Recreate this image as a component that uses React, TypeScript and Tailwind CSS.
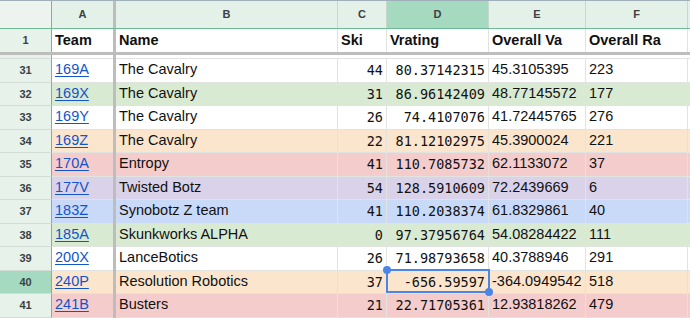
import React from "react";

type Row = { n: number; team: string; name: string; c: string; d: string; e: string; f: string; bg: string };

const BG: Record<string, string> = {
  w: "bg-white",
  g: "bg-[#d9ead3]",
  o: "bg-[#fce5cd]",
  r: "bg-[#f4cccc]",
  p: "bg-[#d9d2e9]",
  b: "bg-[#c9daf8]",
};

const rows: Row[] = [
  { n: 31, team: "169A", name: "The Cavalry", c: "44", d: "80.37142315", e: "45.3105395", f: "223", bg: "w" },
  { n: 32, team: "169X", name: "The Cavalry", c: "31", d: "86.96142409", e: "48.77145572", f: "177", bg: "g" },
  { n: 33, team: "169Y", name: "The Cavalry", c: "26", d: "74.4107076", e: "41.72445765", f: "276", bg: "w" },
  { n: 34, team: "169Z", name: "The Cavalry", c: "22", d: "81.12102975", e: "45.3900024", f: "221", bg: "o" },
  { n: 35, team: "170A", name: "Entropy", c: "41", d: "110.7085732", e: "62.1133072", f: "37", bg: "r" },
  { n: 36, team: "177V", name: "Twisted Botz", c: "54", d: "128.5910609", e: "72.2439669", f: "6", bg: "p" },
  { n: 37, team: "183Z", name: "Synobotz Z team", c: "41", d: "110.2038374", e: "61.8329861", f: "40", bg: "b" },
  { n: 38, team: "185A", name: "Skunkworks ALPHA", c: "0", d: "97.37956764", e: "54.08284422", f: "111", bg: "g" },
  { n: 39, team: "200X", name: "LanceBotics", c: "26", d: "71.98793658", e: "40.3788946", f: "291", bg: "w" },
  { n: 40, team: "240P", name: "Resolution Robotics", c: "37", d: "-656.59597", e: "-364.0949542", f: "518", bg: "o" },
  { n: 41, team: "241B", name: "Busters", c: "21", d: "22.71705361", e: "12.93818262", f: "479", bg: "r" },
  { n: 42, team: "", name: "", c: "", d: "", e: "", f: "", bg: "p" },
];

const cellB = "border-r border-b border-[#e1e3e1]";
const mono = "font-['DejaVu_Sans_Mono',monospace] text-[13.5px]";

function FrozenBar() {
  return <div className="w-[3px] shrink-0 bg-[#bdbdbd]" />;
}

export default function App() {
  return (
    <div className="w-[690px] h-[318px] overflow-hidden bg-white font-['Liberation_Sans',Arial,sans-serif] text-[14px] text-[#111]">
      {/* column header */}
      <div className="flex h-[29px] border-t border-[#9fb0bb] border-b border-b-[#6dbb93] bg-[#e3f1e8] text-[11px] font-bold text-[#3c4043]">
        <div className="w-[52px] shrink-0 bg-[#edf3ef] border-r border-[#6dbb93]" />
        <div className="w-[61px] shrink-0 flex items-center justify-center">A</div>
        <FrozenBar />
        <div className="w-[222px] shrink-0 flex items-center justify-center border-r border-[#c8d6cd]">B</div>
        <div className="w-[49px] shrink-0 flex items-center justify-center border-r border-[#c8d6cd]">C</div>
        <div className="w-[102px] shrink-0 flex items-center justify-center border-r border-[#c8d6cd] bg-[#a6dac0]">D</div>
        <div className="w-[97px] shrink-0 flex items-center justify-center border-r border-[#c8d6cd]">E</div>
        <div className="w-[102px] shrink-0 flex items-center justify-center border-r border-[#c8d6cd]">F</div>
        <div className="flex-1" />
      </div>

      {/* frozen row 1 */}
      <div className="flex h-[23px] font-bold text-[14.5px]">
        <div className="w-[52px] shrink-0 bg-[#e6f2ea] border-r border-[#6dbb93] flex items-center justify-center text-[11px] text-[#3c4043]">1</div>
        <div className="w-[61px] shrink-0 flex items-center px-[3px] overflow-hidden whitespace-nowrap">Team</div>
        <FrozenBar />
        <div className="w-[222px] shrink-0 flex items-center px-[3px] border-r border-[#e1e3e1]">Name</div>
        <div className="w-[49px] shrink-0 flex items-center px-[3px] border-r border-[#e1e3e1] overflow-hidden">Ski</div>
        <div className="w-[102px] shrink-0 flex items-center px-[3px] border-r border-[#e1e3e1]">Vrating</div>
        <div className="w-[97px] shrink-0 flex items-center px-[3px] border-r border-[#e1e3e1] overflow-hidden whitespace-nowrap">Overall Va</div>
        <div className="w-[102px] shrink-0 flex items-center px-[3px] border-r border-[#e1e3e1] overflow-hidden whitespace-nowrap">Overall Ra</div>
        <div className="flex-1" />
      </div>

      {/* frozen separator */}
      <div className="flex h-[3px] bg-[#bdbdbd]" />

      {/* partial row 30 */}
      <div className="flex h-[4px]">
        <div className="w-[52px] shrink-0 bg-[#e6f2ea] border-r border-[#6dbb93] border-b border-b-[#d3dcd6]" />
        <div className="w-[61px] shrink-0 border-b border-[#e1e3e1]" />
        <FrozenBar />
        <div className="flex-1 border-b border-[#e1e3e1]" />
      </div>

      {rows.map((r) => {
        const sel = r.n === 40;
        const last = r.n === 42;
        return (
          <div key={r.n} className="flex h-[23.5px]">
            <div
              className={`w-[52px] shrink-0 border-r border-[#6dbb93] border-b border-b-[#d3dcd6] flex items-center justify-center text-[11px] font-bold text-[#3c4043] ${
                sel ? "bg-[#a6dac0]" : "bg-[#e6f2ea]"
              }`}
            >
              {last ? "" : r.n}
            </div>
            <div className={`w-[61px] shrink-0 flex items-center px-[3px] border-b border-[#e1e3e1] ${BG[r.bg]}`}>
              <span className="text-[#1155cc] underline underline-offset-[2px] text-[14.5px]">{r.team}</span>
            </div>
            <FrozenBar />
            <div className={`w-[222px] shrink-0 flex items-center px-[3px] text-[14.5px] whitespace-nowrap ${cellB} ${BG[r.bg]}`}>
              {r.name}
            </div>
            <div className={`w-[49px] shrink-0 flex items-center justify-end px-[3px] ${mono} ${cellB} ${BG[r.bg]}`}>{r.c}</div>
            <div className={`relative w-[102px] shrink-0 flex items-center justify-end px-[3px] ${mono} ${cellB} ${BG[r.bg]}`}>
              {r.d}
              {sel && (
                <div className="absolute -left-[1px] -top-[2px] w-[104px] h-[24px] border-2 border-[#4a86e8] z-10">
                  <div className="absolute -left-[5px] -top-[5px] w-[8px] h-[8px] rounded-full bg-[#4a86e8]" />
                  <div className="absolute -right-[5px] -bottom-[5px] w-[8px] h-[8px] rounded-full bg-[#4a86e8]" />
                </div>
              )}
            </div>
            <div className={`w-[97px] shrink-0 flex items-center px-[3px] text-[14.5px] whitespace-nowrap overflow-hidden ${cellB} ${BG[r.bg]}`}>
              {r.e}
            </div>
            <div className={`w-[102px] shrink-0 flex items-center px-[3px] text-[14.5px] ${cellB} ${BG[r.bg]}`}>{r.f}</div>
            <div className={`flex-1 border-b border-[#e1e3e1] ${BG[r.bg]}`} />
          </div>
        );
      })}
    </div>
  );
}
